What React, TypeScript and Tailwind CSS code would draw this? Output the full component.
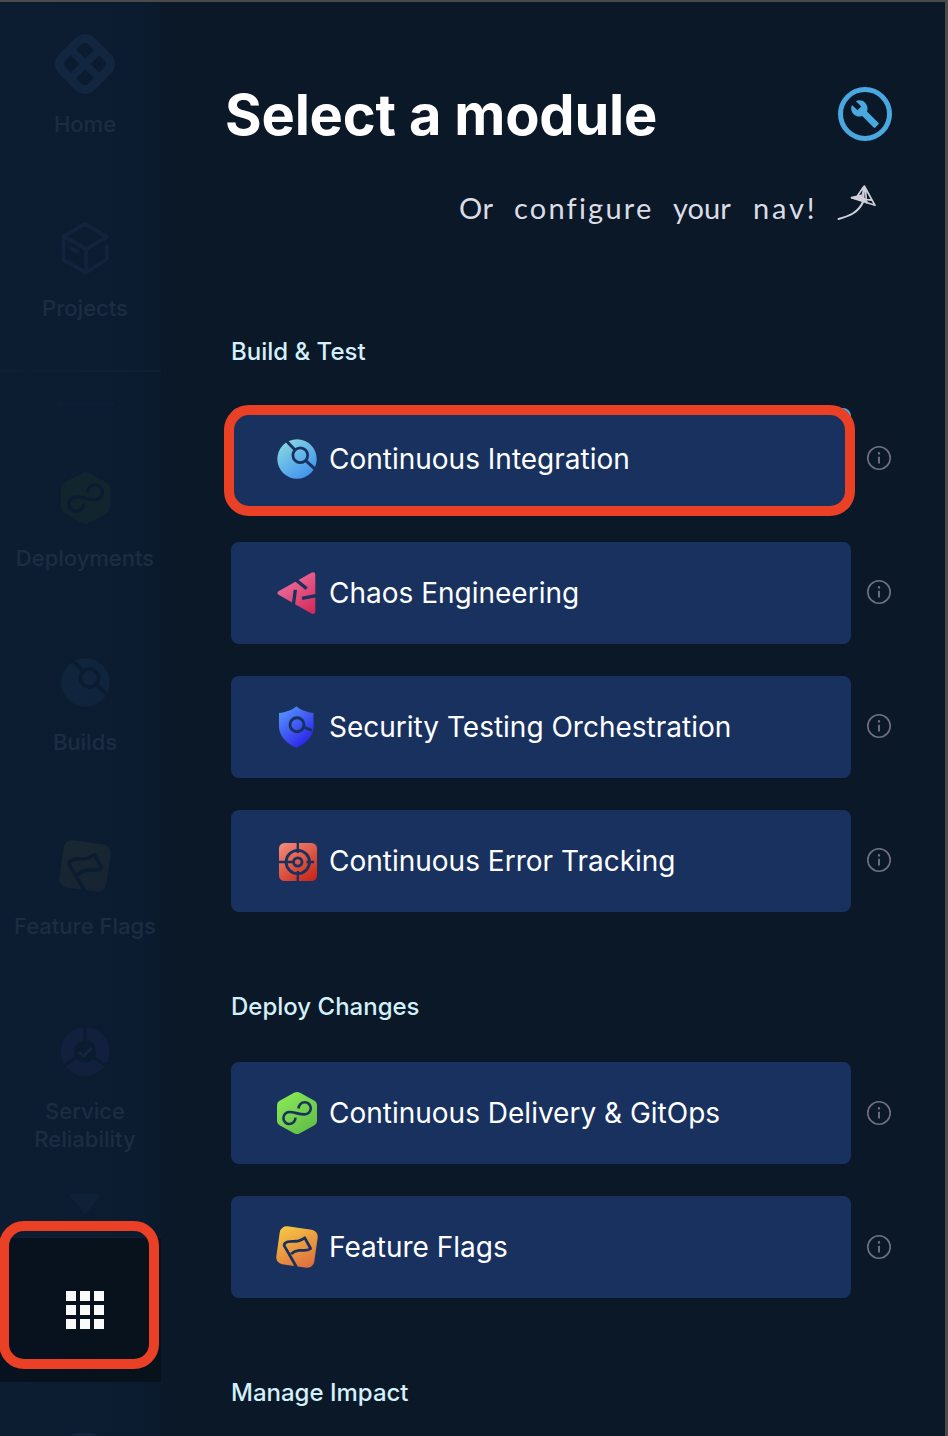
import type { ReactNode } from 'react';
import { MdBuild } from 'react-icons/md';

type IconProps = { id: string; from: string; to: string; cut: string; className: string };

function Gradient({ id, from, to }: { id: string; from: string; to: string }) {
  return (
    <defs>
      <linearGradient id={id} x1="0.1" y1="0" x2="0.8" y2="1">
        <stop offset="0" stopColor={from} />
        <stop offset="1" stopColor={to} />
      </linearGradient>
    </defs>
  );
}

function BuildsIcon({ id, from, to, cut, className }: IconProps) {
  return (
    <svg viewBox="0 0 40 40" className={className} fill="none">
      <Gradient id={id} from={from} to={to} />
      <circle cx="20" cy="20" r="19.7" fill={`url(#${id})`} />
      <path d="M9 1.5 18 11M28.7 21.7l10 9" stroke={cut} strokeWidth="3" />
      <circle cx="23.3" cy="16.3" r="7.4" stroke={cut} strokeWidth="2.8" />
    </svg>
  );
}

function ChaosIcon({ id, from, to, cut, className }: IconProps) {
  return (
    <svg viewBox="0 0 40 42" className={className} fill="none">
      <Gradient id={id} from={from} to={to} />
      <path
        d="M1.5 19.3 34.3.7Q38.3-.8 38.3 3.3v35.4q0 4.3-4 2.8L1.5 22.7Q-.7 21 1.5 19.3Z"
        fill={`url(#${id})`}
      />
      <path d="m19 8 10.7 8.600M18.400 17.900 16.200 34M25 26.300l14-2.600" stroke={cut} strokeWidth="3.300" />
    </svg>
  );
}

function ShieldIcon({ id, from, to, cut, className }: IconProps) {
  return (
    <svg viewBox="0 0 40 42" className={className} fill="none">
      <Gradient id={id} from={from} to={to} />
      <path
        d="M19.400.2C24 4.300 30 6 36.500 7v14.500C35.500 31 29 37.500 19.400 41.800 9.500 37.500 3 31 2 21.500V7C9 6 14.500 4.300 19.400.2Z"
        fill={`url(#${id})`}
      />
      <circle cx="20" cy="18.700" r="7" stroke={cut} strokeWidth="2.900" />
      <path d="m26.500 21.200 8.300 3.100" stroke={cut} strokeWidth="2.900" />
    </svg>
  );
}

function TargetIcon({ id, from, to, cut, className }: IconProps) {
  return (
    <svg viewBox="0 0 40 40" className={className} fill="none">
      <Gradient id={id} from={from} to={to} />
      <rect x="1" y="1" width="38" height="38" rx="5.500" fill={`url(#${id})`} />
      <circle cx="19.800" cy="20" r="11.700" stroke={cut} strokeWidth="2.800" />
      <circle cx="19.800" cy="20" r="4.200" stroke={cut} strokeWidth="2.800" />
      <path d="M1 20h14M28.500 20H36M19.800 1v10M19.800 29v10" stroke={cut} strokeWidth="2.300" />
    </svg>
  );
}

function DeployIcon({ id, from, to, cut, className }: IconProps) {
  return (
    <svg viewBox="0 0 40 42" className={className} fill="none">
      <Gradient id={id} from={from} to={to} />
      <path
        d="M17.500.6q2.500-1.200 5 0l14.500 8Q40 10.300 40 13.500v15q0 3.200-3 4.900l-14.500 8q-2.500 1.200-5 0L3 33.400Q0 31.700 0 28.500v-15Q0 10.300 3 8.600Z"
        fill={`url(#${id})`}
      />
      <path
        d="M18.400 25.600A6 6 0 1 1 12.300 20C17.500 20 21.500 22.400 27.600 22.400A6.100 6.100 0 1 0 21.600 16.400"
        stroke={cut}
        strokeWidth="2.600"
      />
    </svg>
  );
}

function FlagIcon({ id, from, to, cut, className }: IconProps) {
  return (
    <svg viewBox="0 0 41 41" className={className} fill="none">
      <Gradient id={id} from={from} to={to} />
      <rect
        x="1.800"
        y="1.800"
        width="37.400"
        height="37.400"
        rx="6.800"
        transform="rotate(8 20.500 20.500)"
        fill={`url(#${id})`}
      />
      <path
        d="M20 40 8 19.200Q7.700 16.500 11.500 15.400C15 14.500 18 15.600 22 14.500 25 13.500 26.500 12.500 28 11.500L33.800 22C30 24.800 27 23.300 22.500 23.800 19 24.200 17 25.300 14.700 27.400"
        stroke={cut}
        strokeWidth="2.700"
        strokeLinejoin="round"
      />
    </svg>
  );
}

function HomeIcon() {
  return (
    <svg viewBox="0 0 60 60" className="size-[60px]">
      <g transform="rotate(45 30 30)">
        <rect x="5" y="5" width="50" height="50" rx="13" fill="#12263f" />
        <g fill="#0b1c30">
          <path d="M27 27H14.500v-7q0-5.500 5.500-5.500h7Z" transform="translate(-.8 -.8)" />
          <path d="M33 27h12.500v-7q0-5.500-5.500-5.500h-7Z" transform="translate(.8 -.8)" />
          <path d="M27 33H14.500v7q0 5.500 5.500 5.500h7Z" transform="translate(-.8 .8)" />
          <path d="M33 33h12.500v7q0 5.500-5.500 5.500h-7Z" transform="translate(.8 .8)" />
        </g>
      </g>
    </svg>
  );
}

function ProjectsIcon() {
  return (
    <svg
      viewBox="0 0 60 60"
      className="size-[60px]"
      fill="none"
      stroke="#11243c"
      strokeWidth="3.800"
      strokeLinecap="round"
      strokeLinejoin="round"
    >
      <path d="M52 28.500V41L31 54.500 8.500 42V18L30 6l22 13-21 12L8.500 18M31 31v23M15 30l8 4" />
    </svg>
  );
}

function ReliabilityIcon() {
  return (
    <svg viewBox="0 0 60 60" className="size-[60px]" fill="none">
      <circle cx="30" cy="30.500" r="24.500" fill="#121f3d" />
      <circle cx="30" cy="30.500" r="11" fill="#0b1c31" />
      <path d="M30 30.500V5M30 30.500 9 44.500M30 30.500l21 14" stroke="#0b1c31" strokeWidth="3" />
      <path d="m24 31 4.500 4 8-8" stroke="#14263f" strokeWidth="3" />
    </svg>
  );
}

function InfoIcon() {
  return (
    <svg viewBox="0 0 24 24" className="-mt-px ml-4 size-6" fill="none" stroke="#6f7083">
      <circle cx="12" cy="12" r="11.200" strokeWidth="1.600" />
      <path d="M12 10.800v6.700" strokeWidth="1.900" />
      <path d="M12 6.200v2.300" strokeWidth="2.200" />
    </svg>
  );
}

function NavItem({ icon, label }: { icon: ReactNode; label: string }) {
  return (
    <div className="flex h-[184.200px] shrink-0 flex-col items-center">
      <div className="flex h-[60px] items-center justify-center">{icon}</div>
      <div className="mt-4 w-[170px] text-center text-[22px] leading-7 font-medium whitespace-pre-line text-[#1d2c40]">
        {label}
      </div>
    </div>
  );
}

function Module({ icon, label, selected }: { icon: ReactNode; label: string; selected?: boolean }) {
  return (
    <div className="flex items-center">
      <div
        className={`relative flex h-[102px] w-[620px] items-center rounded-lg bg-[#18315f] ${
          selected ? 'border-2 border-[#4aa8e0] pl-[43px]' : 'pl-[45px]'
        }`}
      >
        <div className="flex w-[42px] items-center justify-center">{icon}</div>
        <span className="ml-[11px] text-[28px] leading-9 whitespace-nowrap text-white">{label}</span>
        {selected && (
          <div className="absolute -top-[5px] -left-[9px] h-[111px] w-[631px] rounded-[25px] border-10 border-[#ea4025]" />
        )}
      </div>
      <InfoIcon />
    </div>
  );
}

function Section({ title, children }: { title: string; children?: ReactNode }) {
  return (
    <section>
      <h2 className="h-8 text-[24px] leading-[34px] font-medium text-[#d3f0fb]">{title}</h2>
      <div className="mt-[40.500px] flex flex-col gap-8">{children}</div>
    </section>
  );
}

const card = '#18315f';
const rail = '#0b1c31';

export default function App() {
  return (
    <div className="flex h-[1436px] w-[948px] overflow-hidden border-t-2 border-r-3 border-[#4a4a4a] bg-[#0a1828] font-['Inter',sans-serif]">
      <aside className="flex w-[161px] shrink-0 flex-col overflow-hidden bg-linear-to-r from-[#0c1d32] via-[#0b1c31] via-85% to-[#0a1a2c]">
        <div className="flex h-[368px] shrink-0 flex-col items-center pt-8 pl-[9px]">
          <NavItem icon={<HomeIcon />} label="Home" />
          <NavItem icon={<ProjectsIcon />} label="Projects" />
        </div>
        <div className="shrink-0 border-t-2 border-[#0d1f32]" />
        <div className="mt-[30px] ml-[57px] h-1 w-14 shrink-0 bg-[#0d1f34]" />
        <div className="mt-[62px] flex h-[704px] shrink-0 flex-col items-center pl-[9px]">
          <NavItem
            icon={<DeployIcon id="rail-cd" from="#11252f" to="#11252f" cut={rail} className="h-[52px] w-[49px]" />}
            label="Deployments"
          />
          <NavItem
            icon={<BuildsIcon id="rail-ci" from="#10263b" to="#10233e" cut={rail} className="size-[49px]" />}
            label="Builds"
          />
          <NavItem
            icon={<FlagIcon id="rail-ff" from="#182832" to="#172332" cut={rail} className="size-[52px]" />}
            label="Feature Flags"
          />
          <NavItem icon={<ReliabilityIcon />} label={'Service\nReliability'} />
        </div>
        <div className="flex h-[66px] shrink-0 justify-center border-b border-[#0d2035] pt-[22px] pl-[9px]">
          <svg viewBox="0 0 30 20" className="h-5 w-[30px]">
            <path d="M3 0h24q4 0 2 3L17 18q-2 3-4 0L1 3Q-1 0 3 0Z" fill="#0f2137" />
          </svg>
        </div>
        <div className="relative h-[144px] shrink-0 bg-linear-to-r from-[#08111f] to-[#07121b]">
          <div className="mt-[53px] ml-[66px] grid w-[38px] grid-cols-3 gap-1">
            {Array.from({ length: 9 }, (_, i) => (
              <div key={i} className="size-[10px] bg-[#fafafa]" />
            ))}
          </div>
          <div className="absolute -top-[17px] -left-px h-[148px] w-[160px] rounded-[25px] border-10 border-[#ea4025]" />
        </div>
        <div className="mt-[51px] ml-[70px] h-5 w-7 shrink-0 rounded-md bg-[#12233a]" />
      </aside>

      <main className="min-w-0 flex-1 pl-[70px]">
        <header className="flex items-center justify-between pt-[78px] pr-[53px]">
          <h1 className="-ml-[6px] text-[56px] leading-[70px] font-bold tracking-[-0.200px] whitespace-nowrap text-white">
            Select a module
          </h1>
          <button
            type="button"
            aria-label="Configure"
            className="-mt-[2px] flex size-[54px] items-center justify-center rounded-full border-[5px] border-[#4aa8e0] text-[#4aa8e0]"
          >
            <MdBuild className="size-[30px]" />
          </button>
        </header>

        <div className="mt-[32px] ml-[228px] flex h-[52px] items-center font-['Lato',cursive] text-[29px] leading-[52px] text-[#dcdce6]">
          <span className="w-[55px] tracking-[0.500px]">Or</span>
          <span className="w-[159px] tracking-[2.200px]">configure</span>
          <span className="w-[80px]">your</span>
          <span className="w-[84px] tracking-[2.800px]">nav!</span>
          <svg
            viewBox="0 0 42 40"
            className="-mt-2 h-10 w-[42px]"
            fill="none"
            stroke="#cfd0da"
            strokeWidth="1.700"
            strokeLinejoin="round"
            strokeLinecap="round"
          >
            <path d="M1.500 35C12 32 21 29 26 18" strokeWidth="2" />
            <path d="m27.300 2 10.700 19.300-23.500-7.600 11-2.700ZM26.500 3 20 12.500M27.300 2l-1 16M28.500 5l1 14M14.500 13.700l20 2.500" />
            <path d="m14.500 13.700 11-1.500 5 6Z" fill="#cfd0da" strokeWidth="1" />
          </svg>
        </div>

        <div className="mt-[101px] flex flex-col gap-[78px]">
          <Section title="Build & Test">
            <Module
              selected
              label="Continuous Integration"
              icon={<BuildsIcon id="ci" from="#8bdcdf" to="#3d8fef" cut={card} className="size-10" />}
            />
            <Module
              label="Chaos Engineering"
              icon={<ChaosIcon id="chaos" from="#f07aa8" to="#d32d5d" cut={card} className="h-[42px] w-10" />}
            />
            <Module
              label="Security Testing Orchestration"
              icon={<ShieldIcon id="sto" from="#5799ff" to="#281be8" cut={card} className="h-[42px] w-10" />}
            />
            <Module
              label="Continuous Error Tracking"
              icon={<TargetIcon id="cet" from="#f28b77" to="#ca2819" cut={card} className="mt-[2px] ml-[2px] size-10 shrink-0" />}
            />
          </Section>
          <Section title="Deploy Changes">
            <Module
              label="Continuous Delivery & GitOps"
              icon={<DeployIcon id="cd" from="#8bea55" to="#62bd48" cut={card} className="h-[42px] w-10" />}
            />
            <Module
              label="Feature Flags"
              icon={<FlagIcon id="ff" from="#f6c744" to="#df703d" cut={card} className="-mt-px mr-px size-[42px] shrink-0" />}
            />
          </Section>
          <Section title="Manage Impact" />
        </div>
      </main>
    </div>
  );
}
